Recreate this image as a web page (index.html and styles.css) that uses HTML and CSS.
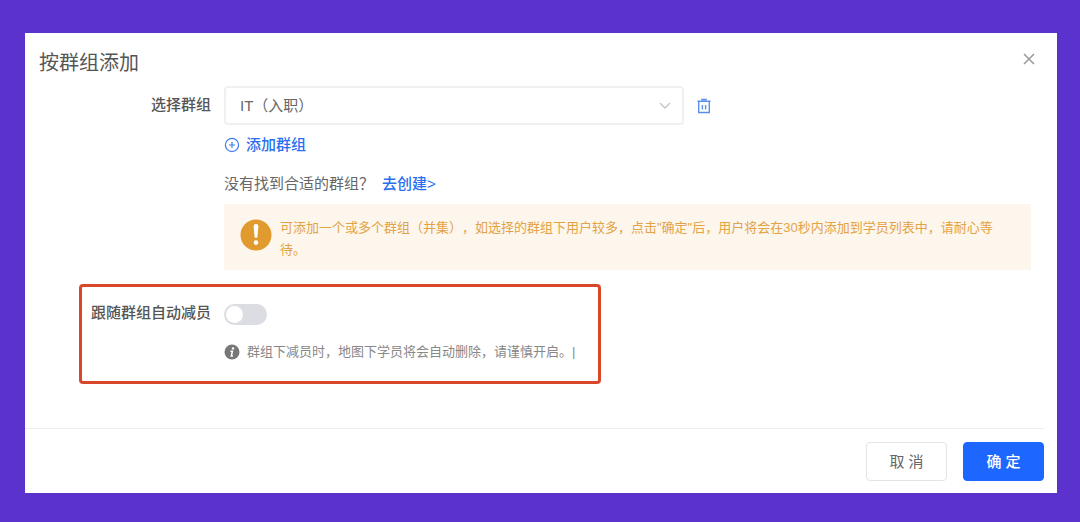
FILE: index.html
```
<!DOCTYPE html>
<html lang="zh-CN">
<head>
    <meta charset="UTF-8">
    <meta name="viewport" content="width=device-width, initial-scale=1.0">
    <title>按群组添加</title>
    <link rel="stylesheet" href="styles.css">
</head>
<body>
    <form class="modal">
        <header class="modal-header">
            <h1 class="title">按群组添加</h1>
            <button type="button" class="icon-btn close-btn" aria-label="关闭">
                <svg width="12" height="12" viewBox="0 0 12 12"><path d="M1 1l10 10M11 1L1 11" fill="none" stroke="#999" stroke-width="1.5"/></svg>
            </button>
        </header>

        <div class="row">
            <label class="label" for="group">选择群组</label>
            <div class="content">
                <div class="select-line">
                    <div class="select-box">
                        <select id="group" class="select">
                            <option>IT（入职）</option>
                        </select>
                        <svg class="arrow" width="12" height="8" viewBox="0 0 12 8"><path d="M1 1l5 5 5-5" fill="none" stroke="#c4c4c4" stroke-width="1.3"/></svg>
                    </div>
                    <button type="button" class="icon-btn" aria-label="删除">
                        <svg width="14" height="16" viewBox="0 0 14 16" fill="none" stroke="#5b8eea" stroke-width="1.4">
                            <path d="M.5 3.2h13M4.2 1.5h5.6M1.7 3.5v11h10.6v-11M5.4 7v4.5M8.6 7v4.5"/>
                        </svg>
                    </button>
                </div>
                <a href="#" class="link add-link">
                    <svg width="16" height="16" viewBox="0 0 16 16" fill="none" stroke="#3d7cf0" stroke-width="1.2">
                        <circle cx="8" cy="8" r="6.6"/>
                        <path d="M8 5v6M5 8h6"/>
                    </svg>
                    添加群组
                </a>
                <p class="text">没有找到合适的群组？<a href="#" class="link">去创建&gt;</a></p>
                <div class="alert">
                    <svg class="alert-icon" width="32" height="32" viewBox="0 0 32 32">
                        <circle cx="16" cy="16" r="15.5" fill="#e09a2d"/>
                        <path d="M13.6 7.5a2.4 2.4 0 0 1 4.8 0l-1.1 11.2h-2.6z" fill="#fff"/>
                        <circle cx="16" cy="23.6" r="2.3" fill="#fff"/>
                    </svg>
                    <p>可添加一个或多个群组（并集），如选择的群组下用户较多，点击"确定"后，用户将会在30秒内添加到学员列表中，请耐心等待。</p>
                </div>
            </div>
        </div>

        <div class="row highlight">
            <label class="label" for="auto">跟随群组自动减员</label>
            <div class="content">
                <input type="checkbox" id="auto" class="switch" role="switch">
                <p class="hint">
                    <svg width="16" height="16" viewBox="0 0 16 16">
                        <circle cx="8" cy="8" r="7.5" fill="#777"/>
                        <circle cx="9" cy="4.4" r="1.2" fill="#fff"/>
                        <path d="M6.4 7.2h2L7.3 12h1.6" fill="none" stroke="#fff" stroke-width="1.5"/>
                    </svg>
                    <span>群组下减员时，地图下学员将会自动删除，请谨慎开启。|</span>
                </p>
            </div>
        </div>

        <footer class="modal-footer">
            <button type="button" class="btn">取 消</button>
            <button type="submit" class="btn btn-primary">确 定</button>
        </footer>
    </form>
</body>
</html>
```

FILE: styles.css
```
*{margin: 0; padding: 0; box-sizing: border-box;}

body{
    min-height: 100vh;
    display: flex;
    padding: 33px 23px 29px 25px;
    background-color: #5b32ce;
    color: #666;
    font-family: "Liberation Sans", "Noto Sans CJK SC", sans-serif;
    font-size: 15px;
    line-height: 20px;
    text-spacing-trim: space-all;
}

button, select{
    font: inherit;
    color: inherit;
    cursor: pointer;
}

svg{
    display: block;
    flex-shrink: 0;
}

.modal{
    flex: 1;
    min-width: 0;
    display: flex;
    flex-direction: column;
    background-color: #fff;
}

.modal-header{
    display: flex;
    justify-content: space-between;
    align-items: flex-start;
    padding: 14px 20px 7px 14px;
}

.title{
    color: #555;
    font-size: 20px;
    font-weight: normal;
    line-height: 32px;
}

.icon-btn{
    border: none;
    background: none;
}

.close-btn{
    padding: 6px 2px;
}

.row{
    display: flex;
    gap: 13px;
    padding-right: 26px;
}

.label{
    width: 186px;
    flex-shrink: 0;
    text-align: right;
    font-weight: 500;
    line-height: 38px;
    color: #555;
}

.content{
    flex: 1;
    min-width: 0;
}

.select-line{
    display: flex;
    align-items: center;
    gap: 13px;
}

.select-box{
    position: relative;
    width: 57%;
}

.select{
    width: 100%;
    height: 39px;
    padding: 0 36px 0 14px;
    border: 2px solid #f0f0f0;
    border-radius: 4px;
    background-color: #fff;
    appearance: none;
    text-spacing-trim: space-all;
}

.arrow{
    position: absolute;
    top: 16px;
    right: 13px;
    pointer-events: none;
}

.link{
    color: #2b6ff0;
    font-weight: 500;
    text-decoration: none;
}

.add-link{
    display: flex;
    align-items: center;
    gap: 6px;
    margin-top: 10px;
}

.text{
    margin: 19px 0 10px;
}

.text .link{
    margin-left: 8px;
}

.alert{
    display: flex;
    gap: 8px;
    padding: 13px 24px 9px 16px;
    background-color: #fdf6ed;
    color: #e3a344;
    font-size: 13px;
    line-height: 22px;
}

.alert-icon{
    margin-top: 2px;
}

.highlight{
    width: 522px;
    max-width: 90%;
    margin: 14px 0 0 54px;
    padding: 7px 0 19px;
    border: 3px solid #d9472b;
    border-radius: 4px;
}

.highlight .label{
    width: 129px;
}

.switch{
    display: block;
    width: 43px;
    height: 21px;
    margin: 10px 0 17px;
    padding: 2px;
    border-radius: 11px;
    background-color: #dcdde2;
    appearance: none;
    cursor: pointer;
}

.switch::before{
    content: "";
    display: block;
    width: 17px;
    height: 17px;
    border-radius: 50%;
    background-color: #fff;
}

.switch:checked{
    background-color: #1d66ff;
}

.switch:checked::before{
    margin-left: auto;
}

.hint{
    display: flex;
    align-items: center;
    gap: 7px;
    color: #888;
    font-size: 13px;
}

.modal-footer{
    display: flex;
    justify-content: flex-end;
    gap: 16px;
    margin: auto 13px 0 0;
    padding: 13px 0 12px;
    border-top: 1px solid #eee;
}

.btn{
    width: 81px;
    height: 39px;
    border: 1px solid #e4e4e4;
    border-radius: 4px;
    background-color: #fff;
}

.btn-primary{
    border-color: #1d66ff;
    background-color: #1d66ff;
    color: #fff;
    font-weight: 500;
}
```
